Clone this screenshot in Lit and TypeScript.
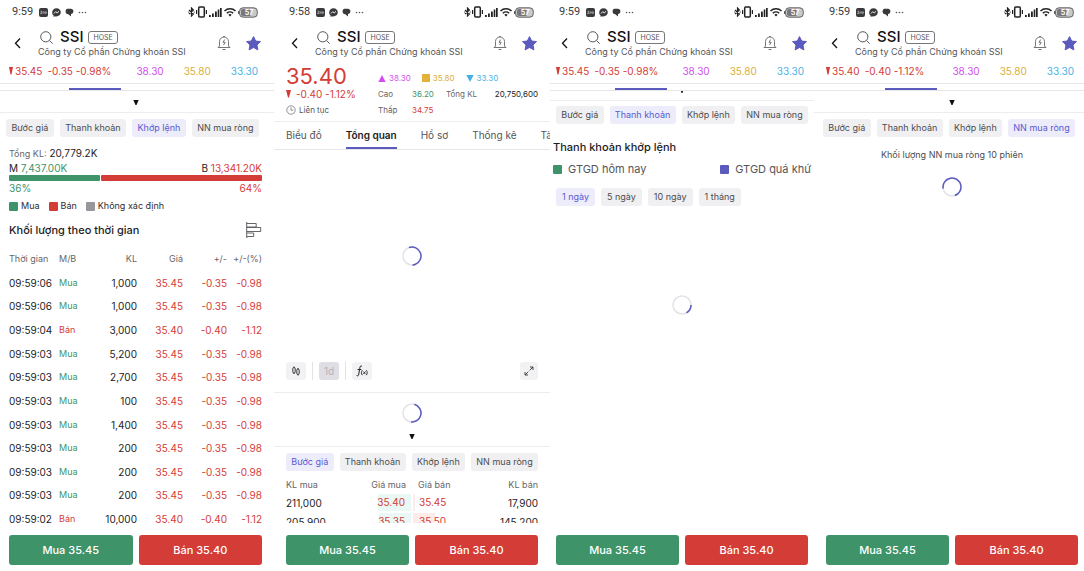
import { LitElement, html, css, svg, nothing } from "lit";
import { customElement, property } from "lit/decorators.js";
import { classMap } from "lit/directives/class-map.js";

const base = css`
  * { box-sizing: border-box; }
  button {
    font: inherit;
    color: inherit;
    border: 0;
    margin: 0;
    padding: 0;
    background: none;
    white-space: nowrap;
    cursor: pointer;
  }
  svg { display: block; flex: none; }
  .up { color: #3f9368; }
  .down { color: #d43c37; }
  .ceil { color: #d052ee; }
  .ref { color: #dcae3a; }
  .floor { color: #4db1df; }
`;

@customElement("status-bar")
class StatusBar extends LitElement {
  @property() time = "";
  static styles = [base, css`
    :host { display: flex; align-items: center; height: 24px; padding: 0 4px 0 3px; color: #3a3a3c; }
    .time { font-size: 11px; line-height: 16px; font-family: Roboto, "Open Sans", sans-serif; }
    .apps { display: flex; align-items: center; gap: 4px; margin-left: 6px; flex: 1; }
    .sys { display: flex; align-items: center; gap: 1px; }
  `];
  render() {
    return html`
      <span class="time">${this.time}</span>
      <span class="apps">
        <svg width="9" height="9" viewBox="0 0 9 9"><rect width="9" height="9" rx="2" fill="#3a3a3c"/><path d="M1.5 3.3h1.6L1.5 5.6h1.7M4 4v1.6M5 3.2v2.4M6 4.6a.7.8 0 1 0 1.6 0a.7.8 0 1 0-1.6 0" stroke="#ddd" stroke-width=".6" fill="none"/></svg>
        <svg width="9" height="9" viewBox="0 0 9 9"><path d="M4.5.2C2 .2.2 2 .2 4.400c0 1.300.5 2.300 1.400 3.100V8.900l1.400-.7c2.900.8 5.800-1.100 5.800-3.900C8.800 2 7 .2 4.500.2z" fill="#3a3a3c"/><path d="M2 5.500 3.700 3.700 5.200 4.900 7 3.300" stroke="#fff" stroke-width=".9" fill="none"/></svg>
        <svg width="9" height="9" viewBox="0 0 9 9"><path d="M2.400.7h3.400C7.400.7 8.400 1.700 8.400 3.200S7.400 5.900 6 6.100V8.400L3.300 6.200C1.500 6.200.6 5 .6 3.500S1.200.9 2.400.7z" fill="#3a3a3c"/></svg>
        <svg width="9" height="9" viewBox="0 0 9 9" fill="#55555a"><circle cx="1.500" cy="4.500" r=".8"/><circle cx="4.500" cy="4.500" r=".8"/><circle cx="7.500" cy="4.500" r=".8"/></svg>
      </span>
      <span class="sys">
        <svg width="7" height="10" viewBox="0 0 7 10"><path d="M1 3l4.400 4L3.500 9V1l1.900 2L1 7" fill="none" stroke="#222" stroke-width="1.200"/><circle cx=".8" cy="5" r=".6"/><circle cx="6.200" cy="5" r=".6"/></svg>
        <svg width="11" height="12" viewBox="0 0 11 12"><rect x="2.700" y="1" width="5.600" height="10" rx="1" fill="none" stroke="#222" stroke-width="1.500"/><path d="M.6 4v4M10.400 4v4" stroke="#222" stroke-width="1.200"/></svg>
        <svg width="14" height="11" viewBox="0 0 14 11" fill="#222"><rect x="1" y="8" width="1.800" height="2"/><rect x="4" y="6.500" width="1.800" height="3.500"/><rect x="7" y="4.500" width="1.800" height="5.500"/><rect x="9.700" y="2.500" width="1.600" height="7.500"/><rect x="12" y="1" width="1.700" height="9"/></svg>
        <svg width="14" height="10" viewBox="0 0 14 10"><path d="M1.500 4a8 8 0 0 1 11 0M3.800 6.300a4.700 4.700 0 0 1 6.400 0" fill="none" stroke="#222" stroke-width="1.500"/><path d="M5.300 7.700a2.500 2.500 0 0 1 3.400 0L7 9.600z" fill="#222"/></svg>
        <svg width="20" height="11" viewBox="0 0 20 11"><rect x="1.500" y=".8" width="17.800" height="9.400" rx="3.500" fill="#c9c9cb" stroke="#55555a" stroke-width=".9"/><path d="M5 2h7.500v7H5a2 2 0 0 1-2-2V4a2 2 0 0 1 2-2z" fill="#77777b"/><rect y="4" width="1.200" height="3" rx=".5" fill="#55555a"/><text x="11" y="8" font-size="7" font-weight="700" font-family="Inter, sans-serif" fill="#fff" text-anchor="middle">57</text></svg>
      </span>`;
  }
}

@customElement("stock-header")
class StockHeader extends LitElement {
  static styles = [base, css`
    :host { display: flex; align-items: center; height: 38px; padding: 0 1px 0 5px; }
    .back { width: 8px; height: 16px; margin-right: 16px; }
    .info { flex: 1; min-width: 0; }
    .line { display: flex; align-items: center; height: 18px; padding-left: 2px; }
    .code { margin-left: 7px; font-size: 15px; line-height: 18px; font-weight: 500; color: #111; }
    .exch { margin-left: 5px; padding: 0 4px; font-size: 7px; line-height: 11px; border: 1px solid #77777b; border-radius: 3px; color: #55555a; }
    .name { font-size: 9px; line-height: 12px; color: #55555a; white-space: nowrap; }
    .acts { display: flex; align-items: center; gap: 15px; }
  `];
  render() {
    return html`
      <button class="back" aria-label="Quay lại">
        <svg width="8" height="16" viewBox="0 0 8 16"><path d="M6 3.500 1.500 8.300 6 13" fill="none" stroke="#111" stroke-width="1.300"/></svg>
      </button>
      <div class="info">
        <div class="line">
          <svg width="13" height="13" viewBox="0 0 13 13"><circle cx="5.800" cy="5.800" r="5.100" fill="none" stroke="#55555a"/><path d="m9.500 9.500 3.200 3.200" stroke="#55555a"/></svg>
          <span class="code">SSI</span><span class="exch">HOSE</span>
        </div>
        <div class="name">Công ty Cổ phần Chứng khoán SSI</div>
      </div>
      <div class="acts">
        <button aria-label="Cảnh báo">
          <svg width="14" height="16" viewBox="0 0 14 16" fill="none" stroke="#66666b" stroke-width=".9"><path d="M2.500 11V6.500a4.500 4.500 0 0 1 9 0V11l1.500 1.500H1zM5.500 14.500h3M6.200 1.500h1.600"/><path d="M7.700 4.500 6 7.300h2.200L6.500 10"/></svg>
        </button>
        <button aria-label="Theo dõi">
          <svg width="15" height="15" viewBox="0 0 15 15"><path d="M7.500.6 9.700 5l4.800.6-3.500 3.400.9 4.900-4.400-2.400-4.400 2.400.9-4.900L.5 5.600 5.300 5z" fill="#5b5bbf" stroke="#5b5bbf" stroke-linejoin="round"/></svg>
        </button>
      </div>`;
  }
}

@customElement("quote-strip")
class QuoteStrip extends LitElement {
  @property() price = "";
  @property() change = "";
  static styles = [base, css`
    :host { display: block; }
    .row { display: flex; align-items: center; height: 18px; margin-bottom: 3px; font-size: 10px; line-height: 14px; white-space: nowrap; }
    .price { display: flex; align-items: center; gap: 2px; margin-right: 5px; }
    .bounds { display: flex; gap: 20px; margin-left: auto; padding-right: 4px; }
  `];
  render() {
    return html`<div class="row">
      <span class="price down"><svg width="4" height="8" viewBox="0 0 4 8"><path d="M0 0h4L2.500 7.500h-1z" fill="#d43c37"/></svg>${this.price}</span>
      <span class="down">${this.change}</span>
      <span class="bounds"><span class="ceil">38.30</span><span class="ref">35.80</span><span class="floor">33.30</span></span>
    </div>`;
  }
}

@customElement("load-ring")
class LoadRing extends LitElement {
  @property({ type: Number }) from = 0;
  @property({ type: Number }) sweep = 180;
  static styles = [base, css`:host { display: flex; justify-content: center; }`];
  render() {
    const len = 2 * Math.PI * 9;
    const arc = (this.sweep / 360) * len;
    return html`<svg width="20" height="20" viewBox="0 0 20 20" fill="none" stroke-width="1.500" role="img" aria-label="Đang tải">
      <circle cx="10" cy="10" r="9" stroke="#e2e2e8"/>
      ${svg`<circle cx="10" cy="10" r="9" stroke="#5b5bbf" stroke-dasharray="${arc} ${len}" transform="rotate(${this.from} 10 10)"/>`}
    </svg>`;
  }
}

@customElement("chip-row")
class ChipRow extends LitElement {
  @property({ type: Array }) items: string[] = [];
  @property({ type: Number }) active = 0;
  @property({ type: Boolean }) roomy = false;
  static styles = [base, css`
    :host { display: flex; gap: 6px; }
    button { flex: 1 0 auto; height: 18px; padding: 0 5px; font-size: 9px; line-height: 18px; border-radius: 3px; background: #f0f0f2; color: #4c4c50; }
    .roomy { flex: none; padding: 0 6px; }
    .on { background: #ececfa; color: #5a5ad2; }
  `];
  render() {
    return this.items.map((t, i) => html`<button class=${classMap({ on: i === this.active, roomy: this.roomy })}>${t}</button>`);
  }
}

@customElement("trade-footer")
class TradeFooter extends LitElement {
  static styles = [base, css`
    :host { display: grid; grid-template-columns: 1fr 1fr; gap: 6px; padding: 4px 0 6px; }
    button { height: 30px; border-radius: 3px; color: #fff; font-size: 11px; font-weight: 500; }
    .buy { background: #3f9368; }
    .sell { background: #d43c37; }
  `];
  render() {
    return html`<button class="buy">Mua 35.45</button><button class="sell">Bán 35.40</button>`;
  }
}

const VIEWS = ["Bước giá", "Thanh khoản", "Khớp lệnh", "NN mua ròng"];
const TRADES: [string, boolean, string][] = [
  ["09:59:06", true, "1,000"], ["09:59:06", true, "1,000"], ["09:59:04", false, "3,000"],
  ["09:59:03", true, "5,200"], ["09:59:03", true, "2,700"], ["09:59:03", true, "100"],
  ["09:59:03", true, "1,400"], ["09:59:03", true, "200"], ["09:59:03", true, "200"],
  ["09:59:03", true, "200"], ["09:59:02", false, "10,000"],
];
const SHARE = { buy: 36, sell: 64 };
const BOOK = [
  { bidVol: "211,000", bid: "35.40", ask: "35.45", askVol: "17,900", b: 53, a: 3 },
  { bidVol: "205,900", bid: "35.35", ask: "35.50", askVol: "145,200", b: 51, a: 35 },
];

@customElement("app-root")
class AppRoot extends LitElement {
  static styles = [base, css`
    :host {
      display: grid;
      grid-template-columns: 274fr 276fr 264fr 270fr;
      height: 100vh;
      overflow: hidden;
      background: #fff;
      color: #1c1c1e;
      font-family: Inter, "Liberation Sans", sans-serif;
      font-size: 10px;
      line-height: 14px;
    }
    .phone { display: flex; flex-direction: column; min-width: 0; min-height: 0; }
    .p1 { padding: 0 12px 0 9px; }
    .p2 { padding: 0 12px; }
    .p3 { padding: 0 6px; }
    .p4 { padding: 0 6px 0 12px; }
    .p1 .bleed { margin: 0 -12px 0 -9px; }
    .p2 .bleed { margin: 0 -12px; }
    .p3 .bleed { margin: 0 -6px; }
    .p4 .bleed { margin: 0 -6px 0 -12px; }
    .body { flex: 1; min-height: 0; display: flex; flex-direction: column; }
    .body > * { flex: none; }
    .p2 .body { overflow: hidden; margin: 0 -12px 8px; padding: 0 12px; }
    .rule { border-top: 1px solid #ededf0; }
    .edge { height: 8px; border-top: 1px solid #e6e6e9; border-bottom: 1px solid #e6e6e9; display: flex; align-items: flex-end; }
    .mark { width: 52px; height: 2px; background: #5b5bbf; }
    .p1 .mark { margin-left: 69px; }
    .p3 .mark { margin-left: 65px; }
    .p4 .mark { margin-left: 71px; }
    .fold { display: flex; align-items: center; justify-content: center; height: 21px; padding-top: 2px; }
    .fold.cut { height: 9px; padding: 0; align-items: flex-start; }
    .views { margin: 6px 0 0; }
    .p1 .views, .p4 .views { margin-left: -3px; margin-right: 3px; }
    .p3 .views { margin-top: 5px; }
    .muted { color: #66666b; }
    .label { font-size: 9px; }
    .between { display: flex; justify-content: space-between; }

    .total { margin-top: 9px; }
    .split { display: flex; gap: 1px; height: 6px; }
    .bar { border-radius: 1px; }
    .bar.buy { background: #3f9368; }
    .bar.sell { background: #d43c37; }
    .legend { display: flex; gap: 9px; margin-top: 4px; font-size: 9px; color: #2c2c2e; }
    .key { display: flex; align-items: center; gap: 3px; }
    .sq { width: 9px; height: 9px; border-radius: 1px; }
    .green { background: #3f9368; }
    .red { background: #d43c37; }
    .grey { background: #96969b; }
    .violet { background: #5b5bbf; }
    h2 { margin: 0; font-size: 11px; line-height: 16px; font-weight: 500; color: #1c1c1e; }
    .headline { align-items: center; height: 18px; margin-top: 8px; }
    .fill { flex: 1; min-height: 0; margin-top: 8px; }
    table { width: 100%; border-collapse: collapse; table-layout: fixed; }
    th, td { padding: 0; font-weight: 400; text-align: right; white-space: nowrap; }
    th { font-size: 9px; color: #66666b; }
    .l { text-align: left; }
    .trades { height: 100%; }
    .trades thead tr { height: 24px; }
    .c1 { width: 50px; } .c2 { width: 34px; } .c3 { width: 44px; } .c4 { width: 46px; } .c5 { width: 44px; }

    .summary { display: grid; grid-template-columns: 92px 1fr; height: 59px; }
    .big { font-size: 22px; line-height: 28px; height: 24px; }
    .delta, .sess { display: flex; align-items: center; gap: 5px; height: 16px; white-space: nowrap; }
    .sess { gap: 3px; font-size: 8px; color: #55555a; }
    .facts { padding-top: 8px; font-size: 8px; line-height: 16px; white-space: nowrap; }
    .limits { display: flex; gap: 11px; }
    .facts dl { display: grid; grid-template-columns: 34px 34px 30px 1fr; margin: 0; }
    .facts dd { margin: 0; }
    .facts .vol { text-align: right; }
    .tabs { display: flex; gap: 24px; height: 29px; padding-left: 12px; overflow: hidden; border-top: 1px solid #ededf0; border-bottom: 1px solid #e6e6e9; }
    .tabs button { flex: none; font-size: 10px; color: #55555a; border-bottom: 2px solid transparent; }
    .tabs .on { color: #1c1c1e; font-weight: 600; border-color: #5b5bbf; }
    .chart { height: 212px; display: flex; align-items: center; justify-content: center; }
    .tools { display: flex; align-items: center; height: 18px; margin-bottom: 12px; }
    .tool { display: grid; place-items: center; width: 20px; height: 18px; border-radius: 3px; background: #f2f2f4; }
    .tool.off { background: #dedee4; color: #b4b4ba; }
    .tool.end { margin-left: auto; width: 18px; }
    .sep { width: 1px; height: 18px; margin: 0 6px; background: #e3e3e6; }
    .mini { padding-top: 10px; }
    .p2 .fold { height: 23px; padding-top: 4px; }
    .book { margin-top: 5px; }
    .book tr { height: 19px; }
    .book thead tr { height: 17px; }
    .cell { height: 17px; line-height: 17px; }
    .bid { margin-right: 1px; padding-right: 6px; }
    .ask { margin-left: 1px; padding-left: 6px; text-align: left; }
    .hb { padding-right: 6px; } .ha { padding-left: 6px; }

    .p3 h2 { margin: 15px 0 0 -3px; }
    .wide { display: flex; justify-content: space-between; margin: 5px -3px 10px; font-size: 11px; line-height: 18px; color: #55555a; }
    .wide .key { gap: 6px; white-space: nowrap; }
    .hollow { margin-top: 89px; }
    .note { margin: 11px 0 15px; text-align: center; font-size: 9px; color: #4c4c50; }
  `];

  private arrow() {
    return html`<svg width="6" height="5" viewBox="0 0 6 5"><path d="M.3 0h5.400L3.500 5h-1z" fill="#111"/></svg>`;
  }

  private arrowTip() {
    return html`<svg width="2" height="2" viewBox="0 0 2 2"><path d="M0 0h2L1.500 2h-1z" fill="#111"/></svg>`;
  }

  private top(time: string, price?: string, change?: string) {
    return html`<status-bar .time=${time}></status-bar><stock-header></stock-header>
      ${price ? html`<quote-strip .price=${price} .change=${change!}></quote-strip>
        <div class="edge bleed"><div class="mark"></div></div>` : nothing}`;
  }

  private matched() {
    return html`<section class="phone p1">
      ${this.top("9:59", "35.45", "-0.35 -0.98%")}
      <div class="fold">${this.arrow()}</div><div class="rule bleed"></div>
      <chip-row class="views" .items=${VIEWS} .active=${2}></chip-row>
      <div class="total"><span class="muted label">Tổng KL:</span> 20,779.2K</div>
      <div class="between"><span>M <span class="up">7,437.00K</span></span><span>B <span class="down">13,341.20K</span></span></div>
      <div class="split"><div class="bar buy" style="flex:${SHARE.buy}"></div><div class="bar sell" style="flex:${SHARE.sell}"></div></div>
      <div class="between"><span class="up">${SHARE.buy}%</span><span class="down">${SHARE.sell}%</span></div>
      <div class="legend">
        <span class="key"><i class="sq green"></i>Mua</span><span class="key"><i class="sq red"></i>Bán</span><span class="key"><i class="sq grey"></i>Không xác định</span>
      </div>
      <div class="between headline"><h2>Khối lượng theo thời gian</h2>
        <button aria-label="Biểu đồ khối lượng"><svg width="16" height="16" viewBox="0 0 16 16" fill="none" stroke="#55555a" stroke-width=".9"><path d="M.7 0v16M.7 1.500h9.500v3.500H.7M.7 5.500h14v4H.7M.7 11h7v3.500h-7"/></svg></button>
      </div>
      <div class="fill"><table class="trades">
        <colgroup><col class="c1"><col class="c2"><col class="c3"><col class="c4"><col class="c5"><col></colgroup>
        <thead><tr><th class="l">Thời gian</th><th class="l">M/B</th><th>KL</th><th>Giá</th><th>+/-</th><th>+/-(%)</th></tr></thead>
        <tbody>${TRADES.map(([t, buy, v]) => html`<tr><td class="l">${t}</td><td class="l label ${buy ? "up" : "down"}">${buy ? "Mua" : "Bán"}</td><td>${v}</td>
          <td class="down">${buy ? "35.45" : "35.40"}</td><td class="down">${buy ? "-0.35" : "-0.40"}</td><td class="down">${buy ? "-0.98" : "-1.12"}</td></tr>`)}</tbody>
      </table></div>
      <trade-footer></trade-footer>
    </section>`;
  }

  private overview() {
    const tabs = ["Biểu đồ", "Tổng quan", "Hồ sơ", "Thống kê", "Tài chính"];
    return html`<section class="phone p2">
      ${this.top("9:58")}
      <div class="summary">
        <div>
          <div class="big down">35.40</div>
          <div class="delta down"><svg width="5" height="8" viewBox="0 0 5 8"><path d="M0 0h5L3 7.500H2z" fill="#d43c37"/></svg>-0.40 -1.12%</div>
          <div class="sess"><svg width="10" height="10" viewBox="0 0 10 10" fill="none" stroke="#77777b" stroke-width=".8"><circle cx="5" cy="5" r="4.200"/><path d="M5 2.300V5.200h2.300"/></svg>Liên tục</div>
        </div>
        <div class="facts">
          <div class="limits">
            <span class="key ceil"><svg width="8" height="7" viewBox="0 0 8 7"><path d="M4 0l3.700 7H.3z" fill="#d64cf5"/></svg>38.30</span>
            <span class="key ref"><svg width="8" height="8" viewBox="0 0 8 8"><path d="M0 0h8v8H0z" fill="#e2b23a"/></svg>35.80</span>
            <span class="key floor"><svg width="8" height="7" viewBox="0 0 8 7"><path d="M4 7l3.700-7H.3z" fill="#42b0ea"/></svg>33.30</span>
          </div>
          <dl><dt class="muted">Cao</dt><dd class="up">36.20</dd><dt class="muted">Tổng KL</dt><dd class="vol">20,750,600</dd>
            <dt class="muted">Thấp</dt><dd class="down">34.75</dd></dl>
        </div>
      </div>
      <div class="tabs bleed">${tabs.map((t, i) => html`<button class=${classMap({ on: i === 1 })}>${t}</button>`)}</div>
      <div class="body">
        <div class="chart"><load-ring .from=${-110} .sweep=${195}></load-ring></div>
        <div class="tools">
          <button class="tool" aria-label="Kiểu nến"><svg width="10" height="10" viewBox="0 0 10 10" fill="none" stroke="#222" stroke-width=".9"><path d="M3 .5v1M3 7v1M7 2v1M7 8.500v1"/><rect x="1.800" y="1.500" width="2.400" height="5.500" rx="1.200"/><rect x="5.800" y="3" width="2.400" height="5.500" rx="1.200"/></svg></button>
          <span class="sep"></span><button class="tool off">1d</button><span class="sep"></span>
          <button class="tool" aria-label="Chỉ báo"><svg width="12" height="12" viewBox="0 0 12 12" fill="none" stroke="#222"><path d="M6 1.300C4.500.3 4 1.500 3.700 3.500L2.800 9C2.500 10.800 1.700 11.300.6 10.500M1.500 4.500h3.800"/><path d="M6.300 5.200c-1.200 1.500-1.200 3.500 0 5M10.300 5.200c1.200 1.500 1.200 3.500 0 5M7.300 6.500l2.200 2.600M9.500 6.500 7.300 9.100" stroke-width=".9"/></svg></button>
          <button class="tool end" aria-label="Toàn màn hình"><svg width="10" height="10" viewBox="0 0 10 10" fill="none" stroke="#333" stroke-width=".9"><path d="M6 1h3v3M9 1 5.700 4.300M4 9H1V6M1 9l3.300-3.300"/></svg></button>
        </div>
        <div class="rule bleed"></div>
        <load-ring class="mini" .from=${-75} .sweep=${170}></load-ring>
        <div class="fold">${this.arrow()}</div><div class="rule bleed"></div>
        <chip-row class="views" .items=${VIEWS} .active=${0}></chip-row>
        <table class="book">
          <thead><tr><th class="l">KL mua</th><th class="hb">Giá mua</th><th class="l ha">Giá bán</th><th>KL bán</th></tr></thead>
          <tbody>${BOOK.map(r => html`<tr><td class="l">${r.bidVol}</td>
            <td class="down"><div class="cell bid" style="background:linear-gradient(to left,#e9f8f4 ${r.b}%,transparent 0)">${r.bid}</div></td>
            <td class="down"><div class="cell ask" style="background:linear-gradient(to right,#fdecea ${r.a}%,transparent 0)">${r.ask}</div></td><td>${r.askVol}</td></tr>`)}</tbody>
        </table>
      </div>
      <trade-footer></trade-footer>
    </section>`;
  }

  private liquidity() {
    return html`<section class="phone p3">
      ${this.top("9:59", "35.45", "-0.35 -0.98%")}
      <div class="fold cut">${this.arrowTip()}</div><div class="rule bleed"></div>
      <chip-row class="views" .items=${VIEWS} .active=${1}></chip-row>
      <div class="body">
        <h2>Thanh khoản khớp lệnh</h2>
        <div class="wide"><span class="key"><i class="sq green"></i>GTGD hôm nay</span><span class="key"><i class="sq violet"></i>GTGD quá khứ</span></div>
        <chip-row roomy .items=${["1 ngày", "5 ngày", "10 ngày", "1 tháng"]} .active=${0}></chip-row>
        <load-ring class="hollow" .from=${0} .sweep=${60}></load-ring>
      </div>
      <trade-footer></trade-footer>
    </section>`;
  }

  private foreign() {
    return html`<section class="phone p4">
      ${this.top("9:59", "35.40", "-0.40 -1.12%")}
      <div class="fold">${this.arrow()}</div><div class="rule bleed"></div>
      <chip-row class="views" .items=${VIEWS} .active=${3}></chip-row>
      <div class="body">
        <div class="note">Khối lượng NN mua ròng 10 phiên</div>
        <load-ring .from=${170} .sweep=${260}></load-ring>
      </div>
      <trade-footer></trade-footer>
    </section>`;
  }

  render() {
    return html`${this.matched()}${this.overview()}${this.liquidity()}${this.foreign()}`;
  }
}
